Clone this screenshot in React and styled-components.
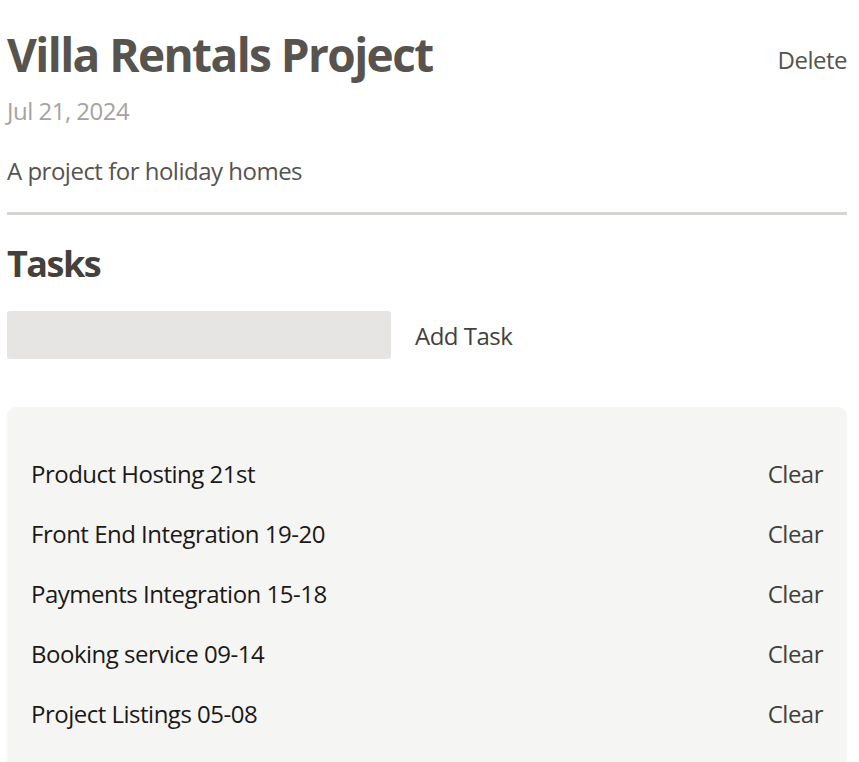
import React from 'react'
import styled, { createGlobalStyle } from 'styled-components'

const GlobalStyle = createGlobalStyle`
    body {
        margin: 0;
        background: #ffffff;
        font-family: "Open Sans", "Noto Sans", sans-serif;
        color: #1c1917;
    }
`

const tasks = [
    { id: 1, text: 'Product Hosting 21st' },
    { id: 2, text: 'Front End Integration 19-20' },
    { id: 3, text: 'Payments Integration 15-18' },
    { id: 4, text: 'Booking service 09-14' },
    { id: 5, text: 'Project Listings 05-08' },
]

function App() {
    return (
        <>
            <GlobalStyle />
            <Page>
                <Header>
                    <TitleRow>
                        <Title>Villa Rentals Project</Title>
                        <TextButton tone="#57534e">Delete</TextButton>
                    </TitleRow>
                    <DateText>Jul 21, 2024</DateText>
                    <Description>A project for holiday homes</Description>
                </Header>
                <section>
                    <SectionTitle>Tasks</SectionTitle>
                    <NewTaskRow>
                        <TaskInput />
                        <TextButton tone="#44403c">Add Task</TextButton>
                    </NewTaskRow>
                    <TaskList>
                        {tasks.map((task) => (
                            <TaskItem key={task.id}>
                                <TaskText>{task.text}</TaskText>
                                <TextButton tone="#44403c">Clear</TextButton>
                            </TaskItem>
                        ))}
                    </TaskList>
                </section>
            </Page>
        </>
    )
}

const Page = styled.div`
    width: 840px;
    padding: 26px 0 0 7px;
    letter-spacing: -0.5px;
`

const Header = styled.header`
    padding-bottom: 24px;
    margin-bottom: 24px;
    border-bottom: 3px solid #d6d3d1;
`

const TitleRow = styled.div`
    display: flex;
    align-items: center;
    justify-content: space-between;
`

const Title = styled.h1`
    margin: 0 0 12px;
    padding-top: 3px;
    font-size: 46px;
    line-height: 51px;
    font-weight: 700;
    letter-spacing: -1.6px;
    color: #57534e;
`

const TextButton = styled.button`
    border: none;
    background: none;
    padding: 2px 0 0;
    font-family: inherit;
    font-size: 24px;
    line-height: 34px;
    letter-spacing: inherit;
    color: ${(p) => p.tone};
    cursor: pointer;
`

const DateText = styled.p`
    margin: 0 0 24px;
    padding-top: 2px;
    font-size: 24px;
    line-height: 34px;
    color: #a8a29e;
`

const Description = styled.p`
    margin: 0;
    padding-top: 2px;
    font-size: 24px;
    line-height: 34px;
    color: #57534e;
`

const SectionTitle = styled.h2`
    margin: 0 0 24px;
    padding-top: 2px;
    font-size: 36px;
    line-height: 46px;
    font-weight: 700;
    letter-spacing: -1.5px;
    color: #44403c;
`

const NewTaskRow = styled.div`
    display: flex;
    align-items: center;
    gap: 24px;
`

const TaskInput = styled.input`
    width: 384px;
    box-sizing: border-box;
    height: 48px;
    padding: 6px 12px;
    border: none;
    border-radius: 3px;
    background: #e7e5e4;
    font-family: inherit;
    font-size: 24px;
`

const TaskList = styled.ul`
    list-style: none;
    margin: 48px 0 0;
    padding: 24px;
    border-radius: 9px;
    background: #f5f5f4;
`

const TaskItem = styled.li`
    display: flex;
    justify-content: space-between;
    align-items: center;
    margin: 24px 0;
    font-size: 24px;
`

const TaskText = styled.span`
    padding-top: 2px;
    line-height: 34px;
`

export default App
